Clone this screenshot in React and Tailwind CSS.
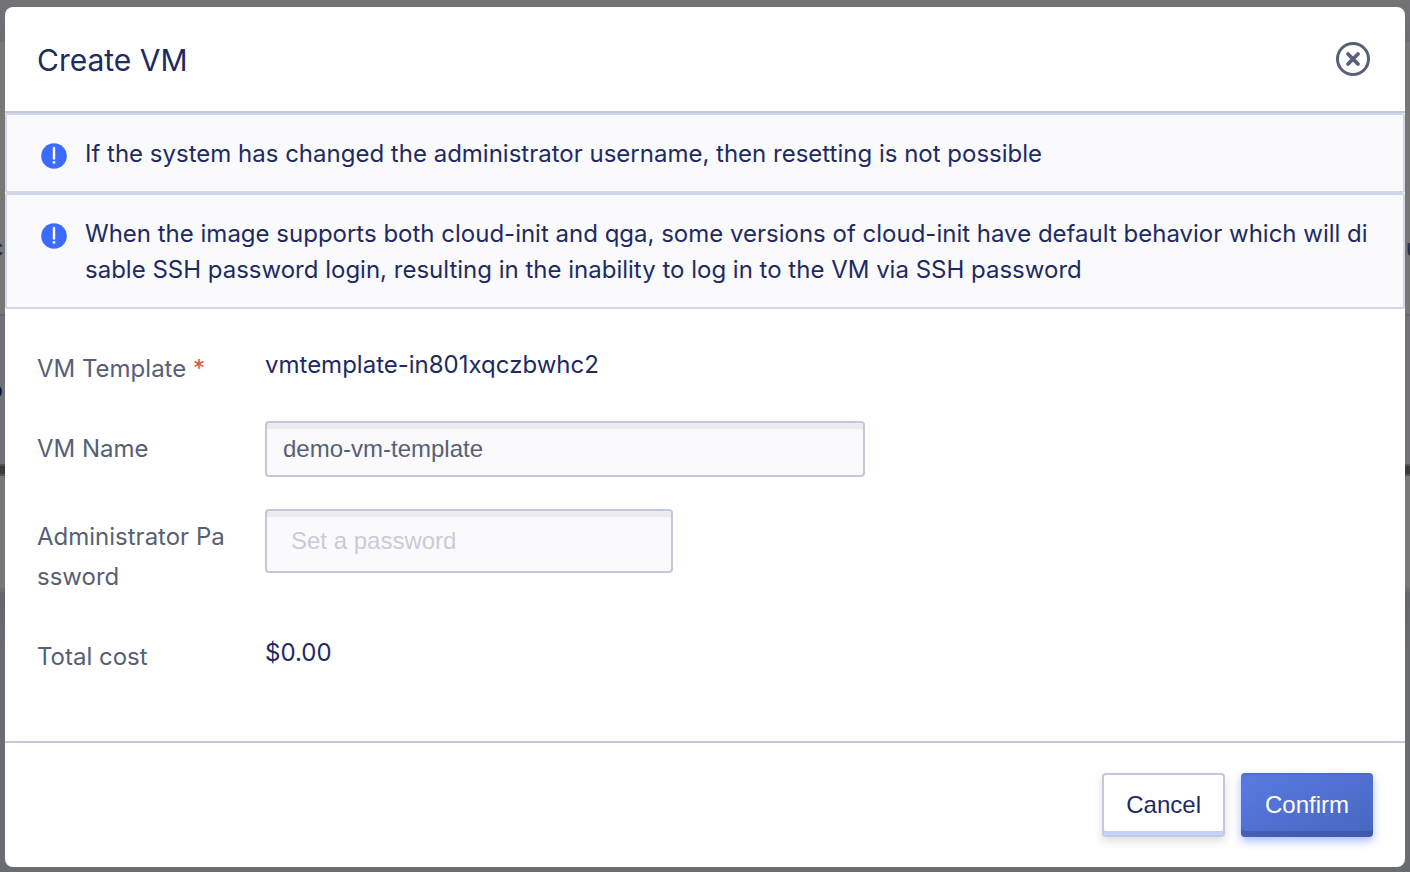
import React from "react";

function PageBehind() {
  return (
    <div
      aria-hidden="true"
      className="absolute inset-0 flex flex-col overflow-hidden bg-[#6b6c71] text-2xl leading-7"
    >
      <div className="h-[42px] shrink-0 bg-linear-to-b from-[#727376] to-[#6e6d74]" />
      <div className="flex h-[274px] shrink-0 items-end justify-between border-b-2 border-[#63656f] bg-[#777777] pb-[52px] text-[#2b3040]">
        <span className="-ml-2.5">c</span>
        <span className="-mr-2.5">u</span>
      </div>
      <div className="flex h-[148px] shrink-0 items-center bg-[#727276] font-bold text-[#0f1733]">
        <span className="-ml-3">o</span>
      </div>
      <div className="h-3 shrink-0 border-y-2 border-[#555558] bg-[#3a3a3a]" />
      <div className="h-[116px] shrink-0 border-b-4 border-[#707070] bg-[#787878]" />
      <div className="flex-1 bg-linear-to-b from-[#65666b] to-[#6b6c71] to-20%" />
    </div>
  );
}

function CloseIcon() {
  return (
    <svg viewBox="0 0 36 36" className="size-9" fill="none" stroke="#576075" aria-hidden="true">
      <circle cx="18" cy="18" r="15.5" strokeWidth="3" />
      <path
        d="M13 13 23 23M23 13 13 23"
        strokeWidth="3.8"
        strokeLinecap="round"
      />
    </svg>
  );
}

function InfoIcon() {
  return (
    <svg viewBox="0 0 26 26" className="mt-[7px] size-[26px] shrink-0" aria-hidden="true">
      <circle cx="13" cy="13" r="12.8" fill="#3d6bff" />
      <path d="M13 4.9V15.6" stroke="#fff" strokeWidth="2.4" strokeLinecap="round" />
      <circle cx="13" cy="19.4" r="1.4" fill="#fff" />
    </svg>
  );
}

function Notice({ children }) {
  return (
    <div className="flex gap-[18px] rounded-xs border-2 border-[#d2d6e8] bg-[#fafafc] pt-[21px] pr-8 pb-[19px] pl-[34px]">
      <InfoIcon />
      <p className="min-w-0 flex-1 leading-9 break-all">{children}</p>
    </div>
  );
}

const labelClass = "w-[196px] shrink-0 leading-10 break-all text-[#576075]";
const inputClass =
  "min-w-0 rounded-sm border-2 border-[#c3c8da] bg-[#fafafc] font-['Liberation_Sans',Arial,sans-serif] text-2xl text-[#576075] shadow-[inset_0_6px_0_#ececee] outline-none placeholder:text-[#c9ccd5]";

export default function App() {
  return (
    <div className="relative flex min-h-screen flex-col px-[5px] pt-[7px] pb-[5px] font-['Inter',sans-serif] text-2xl text-[#1e2b62]">
      <PageBehind />
      <section
        role="dialog"
        aria-labelledby="dialog-title"
        className="relative flex flex-1 flex-col rounded-lg bg-white"
      >
        <header className="flex items-start justify-between border-b-2 border-[#c3c8da] px-8 pt-8 pb-[30px]">
          <h1 id="dialog-title" className="text-[30px] leading-[42px]">
            Create VM
          </h1>
          <button type="button" aria-label="Close" className="mt-[2px] mr-[2px]">
            <CloseIcon />
          </button>
        </header>

        <Notice>If the system has changed the administrator username, then resetting is not possible</Notice>
        <Notice>
          When the image supports both cloud-init and qga, some versions of cloud-init have default
          behavior which will disable SSH password login, resulting in the inability to log in to
          the VM via SSH password
        </Notice>

        <form id="create-vm" className="flex flex-1 flex-col gap-8 px-8 pt-10 pb-16">
          <div className="flex gap-8">
            <span className={labelClass}>
              VM Template <span className="text-[#e0523c]">*</span>
            </span>
            <span className="leading-8">vmtemplate-in801xqczbwhc2</span>
          </div>
          <div className="flex gap-8">
            <label htmlFor="vm-name" className={`${labelClass} pt-2`}>
              VM Name
            </label>
            <input
              id="vm-name"
              type="text"
              defaultValue="demo-vm-template"
              className={`${inputClass} h-14 w-[600px] px-4`}
            />
          </div>
          <div className="flex items-start gap-8">
            <label htmlFor="vm-password" className={`${labelClass} pt-2`}>
              Administrator Password
            </label>
            <input
              id="vm-password"
              type="password"
              placeholder="Set a password"
              className={`${inputClass} h-16 w-[408px] px-6`}
            />
          </div>
          <div className="flex gap-8 pt-2">
            <span className={labelClass}>Total cost</span>
            <span className="leading-8">$0.00</span>
          </div>
        </form>

        <footer className="flex justify-end gap-4 border-t-2 border-[#c3c8da] px-8 py-[30px] font-['Liberation_Sans',Arial,sans-serif]">
          <button
            type="button"
            className="h-16 rounded-sm border-2 border-[#c3c8da] bg-white px-[22px] shadow-[inset_0_-4px_0_#c4d2fb,0_4px_8px_rgba(40,45,60,0.16)]"
          >
            Cancel
          </button>
          <button
            type="submit"
            form="create-vm"
            className="h-16 rounded-sm bg-linear-to-br from-[#587be2] to-[#4866c0] px-6 text-white shadow-[inset_0_-6px_0_rgba(50,70,140,0.4),inset_0_2px_0_rgba(50,70,140,0.2),0_4px_8px_rgba(61,107,255,0.45)]"
          >
            Confirm
          </button>
        </footer>
      </section>
    </div>
  );
}
